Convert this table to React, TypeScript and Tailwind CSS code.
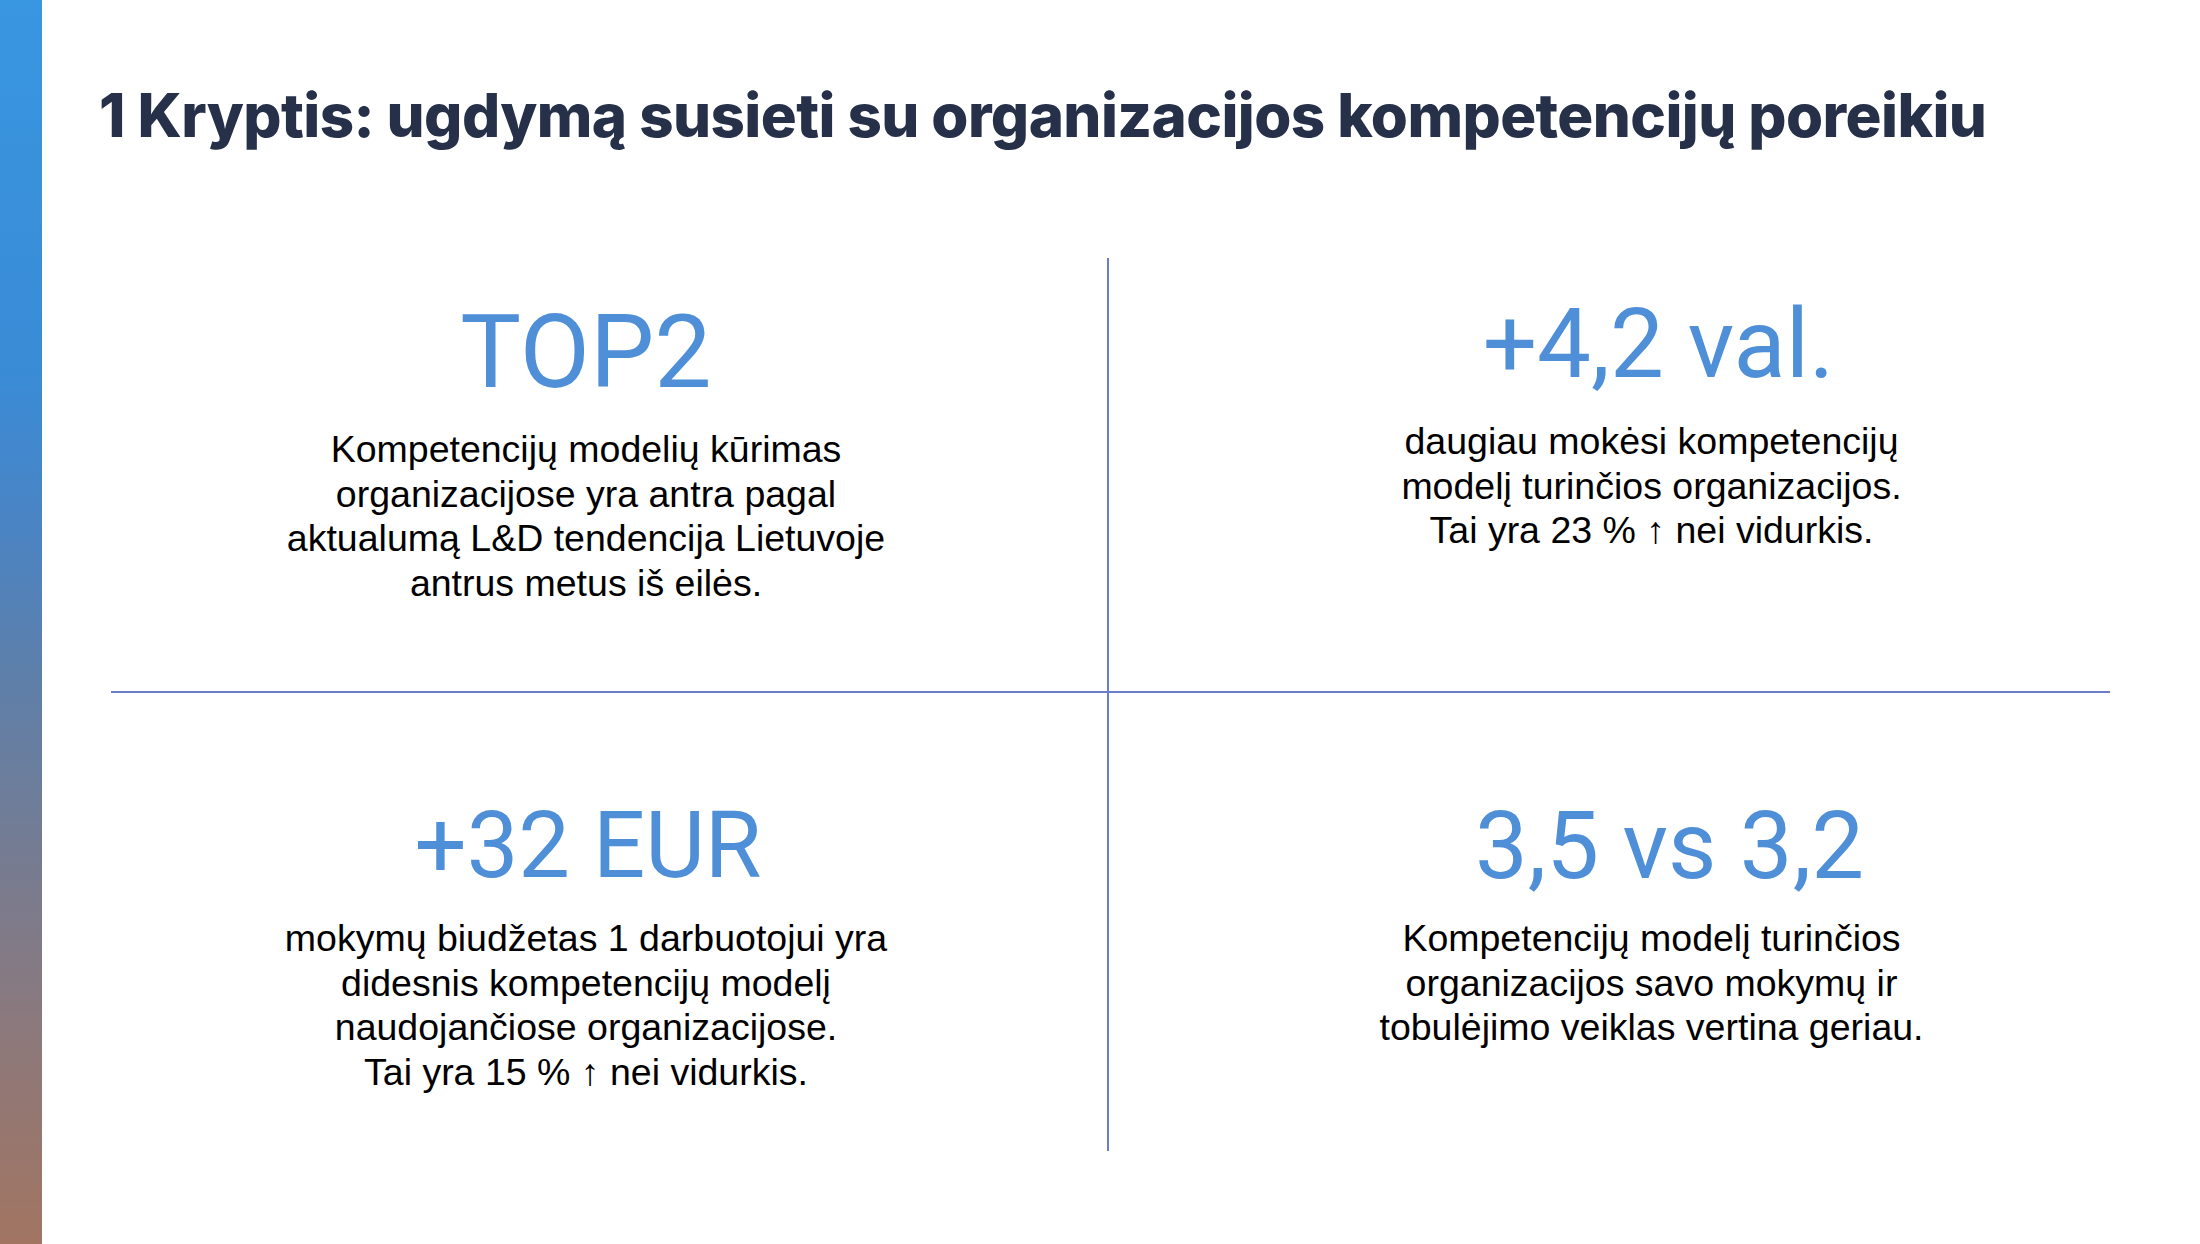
import React from 'react';

interface Stat {
  value: string;
  lines: string[];
  valueClass: string;
  bodyClass: string;
  cellClass: string;
}

const stats: Stat[] = [
  {
    value: 'TOP2',
    lines: [
      'Kompetencijų modelių kūrimas',
      'organizacijose yra antra pagal',
      'aktualumą L&D tendencija Lietuvoje',
      'antrus metus iš eilės.',
    ],
    valueClass: 'text-[102px] pt-[2px]',
    bodyClass: 'mt-[24px]',
    cellClass: 'h-[435px] pt-[41px] pr-[46px] border-r-2 border-b-2',
  },
  {
    value: '+4,2 val.',
    lines: [
      'daugiau mokėsi kompetencijų',
      'modelį turinčios organizacijos.',
      'Tai yra 23 % ↑ nei vidurkis.',
    ],
    valueClass: 'text-[96px] pl-[14px] -mt-[3px]',
    bodyClass: 'mt-[27px]',
    cellClass: 'h-[435px] pt-[41px] pl-[84px] border-b-2',
  },
  {
    value: '+32 EUR',
    lines: [
      'mokymų biudžetas 1 darbuotojui yra',
      'didesnis kompetencijų modelį',
      'naudojančiose organizacijose.',
      'Tai yra 15 % ↑ nei vidurkis.',
    ],
    valueClass: 'text-[92px] pl-[4px]',
    bodyClass: 'mt-[24px]',
    cellClass: 'h-[458px] pt-[107px] pr-[46px] border-r-2',
  },
  {
    value: '3,5 vs 3,2',
    lines: [
      'Kompetencijų modelį turinčios',
      'organizacijos savo mokymų ir',
      'tobulėjimo veiklas vertina geriau.',
    ],
    valueClass: 'text-[94px] pl-[36px] -mt-[1px]',
    bodyClass: 'mt-[23px]',
    cellClass: 'h-[458px] pt-[107px] pl-[84px]',
  },
];

function StatCell({ stat }: { stat: Stat }) {
  return (
    <div className={`flex flex-col items-center border-[#6c7dcc] ${stat.cellClass}`}>
      <div
        className={`leading-none whitespace-nowrap text-[#4f8fd8] font-normal ${stat.valueClass}`}
        style={{ fontFamily: 'Roboto, "Liberation Sans", sans-serif' }}
      >
        {stat.value}
      </div>
      <div
        className={`text-center text-[37.5px] leading-[44.5px] text-black ${stat.bodyClass}`}
        style={{ fontFamily: '"Liberation Sans", Arial, sans-serif' }}
      >
        {stat.lines.map((line) => (
          <div key={line} className="whitespace-nowrap">
            {line}
          </div>
        ))}
      </div>
    </div>
  );
}

export default function App() {
  return (
    <div className="flex h-[1244px] w-full overflow-hidden bg-white">
      {/* side accent */}
      <div className="w-[42px] shrink-0 bg-[linear-gradient(to_bottom,#3996e0_0%,#3a8bd6_30%,#4a84c4_42%,#5f7fa8_55%,#7b7b8d_72%,#8f7878_85%,#a27562_100%)]" />

      <div className="flex-1">
        <h1
          className="ml-[57px] mt-[85px] text-[60px] font-extrabold leading-none tracking-[-0.58px] text-[#273049] whitespace-nowrap"
          style={{ fontFamily: 'Inter, "Noto Sans", sans-serif' }}
        >
          1 Kryptis: ugdymą susieti su organizacijos kompetencijų poreikiu
        </h1>

        <div className="ml-[69px] mt-[113px] grid w-[1999px] grid-cols-[998px_1001px]">
          {stats.map((s) => (
            <StatCell key={s.value} stat={s} />
          ))}
        </div>
      </div>
    </div>
  );
}
